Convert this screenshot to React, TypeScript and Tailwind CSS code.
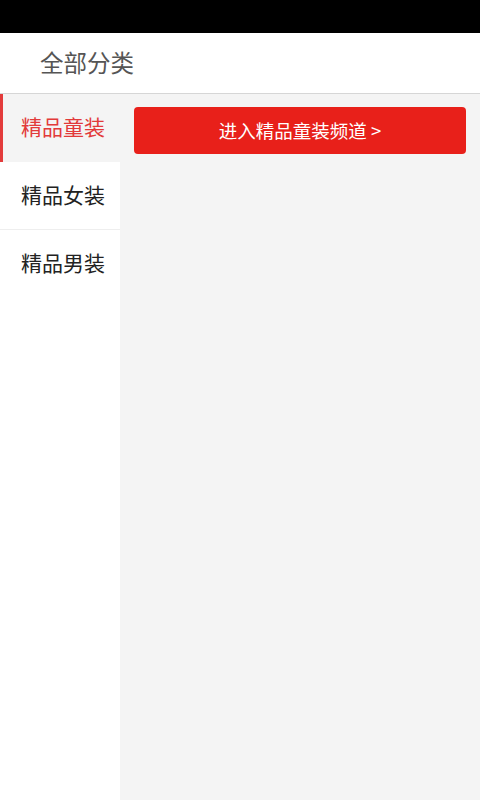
const categories = ['精品童装', '精品女装', '精品男装'];

const font = { fontFamily: '"Noto Sans CJK SC", "Noto Sans", sans-serif' };

export default function App() {
  const active = 0;
  return (
    <div className="flex h-[800px] w-[480px] flex-col overflow-hidden bg-white" style={font}>
      <div className="h-[33px] shrink-0 bg-black" />
      <div className="flex h-[61px] shrink-0 items-center border-b border-[#d6d6d6] bg-white pl-[40px]">
        <span className="text-[23.5px] text-[#555555]">全部分类</span>
      </div>
      <div className="flex flex-1">
        <div className="w-[120px] shrink-0 bg-white">
          {categories.map((c, i) => (
            <div
              key={c}
              className={
                i === active
                  ? 'flex h-[68px] items-center border-l-[3px] border-[#e33b3b] bg-[#f4f4f4] pb-[2px] pl-[18px] text-[21px] text-[#e23a3a]'
                  : i === categories.length - 1
                    ? 'flex h-[68px] items-center pb-[2px] pl-[21px] text-[21px] text-[#222222]'
                    : 'flex h-[68px] items-center border-b border-[#eeeeee] pb-[2px] pl-[21px] text-[21px] text-[#222222]'
              }
            >
              {c}
            </div>
          ))}
        </div>
        <div className="flex-1 bg-[#f4f4f4] px-[14px] pt-[13px]">
          <button className="flex h-[47px] w-full items-center justify-center rounded-[4px] bg-[#e8201a] text-[18.5px] text-white">
            进入精品童装频道 &gt;
          </button>
        </div>
      </div>
    </div>
  );
}
